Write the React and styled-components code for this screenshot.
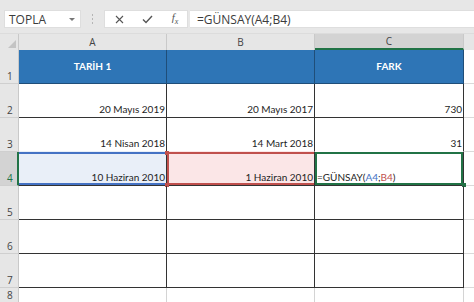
import React from 'react'
import styled, { createGlobalStyle, css } from 'styled-components'

const GlobalStyle = createGlobalStyle`
  html, body { margin: 0; padding: 0; background: #fff; }
  body { overflow: hidden; }
`

const Page = styled.div`
  width: 474px;
  height: 302px;
  display: flex;
  flex-direction: column;
  overflow: hidden;
  font-family: Lato, "Liberation Sans", sans-serif;
`

const Toolbar = styled.div`
  height: 34px;
  flex: none;
  box-sizing: border-box;
  background: #e7e7e7;
  border-bottom: 1px solid #dcdcdc;
  display: flex;
  align-items: flex-start;
  padding: 10px 0 0 4px;
  font-family: "Open Sans", "Liberation Sans", sans-serif;
  font-size: 12px;
  color: #3c3c3c;
`

const NameBox = styled.div`
  width: 77px;
  height: 18px;
  box-sizing: border-box;
  background: #fff;
  border: 1px solid #dedede;
  display: flex;
  align-items: center;
  justify-content: space-between;
  padding: 0 5px 0 4px;
`

const Caret = styled.span`
  width: 0;
  height: 0;
  border-left: 3px solid transparent;
  border-right: 3px solid transparent;
  border-top: 3px solid #777;
`

const Grip = styled.div`
  width: 23px;
  height: 18px;
  display: flex;
  flex-direction: column;
  align-items: center;
  justify-content: center;
  gap: 2px;
  span {
    width: 1px;
    height: 2px;
    background: #b5b5b5;
  }
`

const FxBox = styled.div`
  width: 84px;
  height: 18px;
  box-sizing: border-box;
  background: #fff;
  border: 1px solid #dedede;
  display: grid;
  grid-template-columns: 28px 28px 28px;
  align-items: center;
  justify-items: center;
  color: #555;
`

const FxLabel = styled.span`
  font-family: "Liberation Serif", serif;
  font-style: italic;
  font-size: 11px;
  color: #555;
  sub { font-size: 8px; }
`

const FormulaBar = styled.div`
  flex: 1;
  height: 18px;
  margin-left: 2px;
  box-sizing: border-box;
  background: #fff;
  border-top: 1px solid #dedede;
  border-bottom: 1px solid #dedede;
  display: flex;
  align-items: center;
  padding-left: 7px;
`

const Sheet = styled.div`
  flex: 1;
  display: grid;
  grid-template-columns: 19px 148px 148px 149px 1fr;
  grid-template-rows: 16px repeat(7, 34px) 1fr;
  font-size: 10px;
  color: #1e1e1e;
`

const Corner = styled.div`
  background: #e6e6e6;
  border-right: 1px solid #c9c9c9;
  position: relative;
  &::after {
    content: '';
    position: absolute;
    right: 2px;
    bottom: 2px;
    border-left: 8px solid transparent;
    border-bottom: 8px solid #c4c4c4;
  }
`

const ColHead = styled.div`
  background: ${p => (p.$active ? '#d3d3d3' : '#e6e6e6')};
  border-right: 1px solid ${p => (p.$blank ? 'transparent' : '#c9c9c9')};
  border-bottom: ${p => (p.$active ? '2px solid #217346' : '0')};
  box-sizing: border-box;
  display: flex;
  align-items: center;
  justify-content: center;
  font-family: "Open Sans", "Liberation Sans", sans-serif;
  font-size: 10px;
  color: #444;
`

const RowHead = styled.div`
  background: ${p => (p.$active ? '#d3d3d3' : '#e6e6e6')};
  border-right: ${p => (p.$active ? '2px solid #217346' : '1px solid #c9c9c9')};
  border-bottom: 1px solid #cfcfcf;
  box-sizing: border-box;
  display: flex;
  align-items: flex-end;
  padding: 0 0 0 7px;
  font-family: "Open Sans", "Liberation Sans", sans-serif;
  font-size: 10px;
  line-height: 14px;
  color: ${p => (p.$active ? '#217346' : '#444')};
`

const selColors = {
  blue: { line: '#4472c4', fill: '#e9eff8', sides: 'tb' },
  red: { line: '#c0504d', fill: '#fbe6e7', sides: 'tbl' },
  green: { line: '#217346', fill: '#fff', sides: 'tblr' },
}

const selShadow = ({ line, sides }) =>
  [
    sides.includes('t') && `inset 0 2px 0 ${line}`,
    sides.includes('b') && `inset 0 -2px 0 ${line}`,
    sides.includes('l') && `inset 2px 0 0 ${line}`,
    sides.includes('r') && `inset -2px 0 0 ${line}`,
  ]
    .filter(Boolean)
    .join(', ')

const Cell = styled.div`
  position: relative;
  box-sizing: border-box;
  border-right: 1px solid #333;
  border-bottom: 1px solid #333;
  display: flex;
  align-items: flex-end;
  justify-content: ${p => (p.$left ? 'flex-start' : 'flex-end')};
  padding: 0 1px 1px 2px;
  line-height: 13px;
  white-space: nowrap;
  ${p =>
    p.$head &&
    css`
      background: #2e75b6;
      border-right-color: #1f4e79;
      border-bottom-color: #1f4e79;
      align-items: center;
      justify-content: center;
      padding: 0;
      color: #fff;
      font-weight: 700;
      span { margin-bottom: 1px; }
    `}
  ${p =>
    p.$faint &&
    css`
      border-right-color: #d4d4d4;
      border-bottom: 0;
    `}
  ${p =>
    p.$sel &&
    css`
      background: ${selColors[p.$sel].fill};
      box-shadow: ${selShadow(selColors[p.$sel])};
      margin-top: -1px;
      border-top: 1px solid transparent;
    `}
`

const Handle = styled.span`
  position: absolute;
  width: 4px;
  height: 4px;
  background: ${p => p.$color};
  ${p => (p.$top ? 'top: -1px;' : 'bottom: -2px;')}
  ${p => (p.$right ? 'right: -3px;' : 'left: -2px;')}
`

const Filler = styled.div`
  background: #fff;
  border-bottom: ${p => (p.$none ? '0' : '1px solid #dadada')};
`

const Ref = styled.span`
  color: ${p => p.$color};
`

const rows = [
  { n: 1, head: true, cells: ['TARİH 1', '', 'FARK'] },
  { n: 2, cells: ['20 Mayıs 2019', '20 Mayıs 2017', '730'] },
  { n: 3, cells: ['14 Nisan 2018', '14 Mart 2018', '31'] },
  { n: 4, active: true, cells: ['10 Haziran 2010', '1 Haziran 2010', 'formula'] },
  { n: 5, cells: ['', '', ''] },
  { n: 6, cells: ['', '', ''] },
  { n: 7, cells: ['', '', ''] },
]

const selFor = ['blue', 'red', 'green']

const Formula = () => (
  <span>
    =GÜNSAY(<Ref $color="#4472c4">A4</Ref>;<Ref $color="#c0504d">B4</Ref>)
  </span>
)

const App = () => {
  return (
    <Page>
      <GlobalStyle />
      <Toolbar>
        <NameBox>
          <span>TOPLA</span>
          <Caret />
        </NameBox>
        <Grip>
          <span />
          <span />
          <span />
        </Grip>
        <FxBox>
          <svg width="9" height="9" viewBox="0 0 9 9">
            <path d="M1 1L8 8M8 1L1 8" stroke="#555" strokeWidth="1.1" fill="none" />
          </svg>
          <svg width="11" height="9" viewBox="0 0 11 9">
            <path d="M1 4.5L4 7.5L10 1" stroke="#555" strokeWidth="1.4" fill="none" />
          </svg>
          <FxLabel>
            f<sub>x</sub>
          </FxLabel>
        </FxBox>
        <FormulaBar>=GÜNSAY(A4;B4)</FormulaBar>
      </Toolbar>

      <Sheet>
        <Corner />
        <ColHead>A</ColHead>
        <ColHead>B</ColHead>
        <ColHead $active>C</ColHead>
        <ColHead $blank />

        {rows.map(r => (
          <React.Fragment key={r.n}>
            <RowHead $active={r.active}>{r.n}</RowHead>
            {r.cells.map((c, i) => (
              <Cell
                key={i}
                $head={r.head}
                $sel={r.active ? selFor[i] : undefined}
                $left={c === 'formula'}
              >
                {c === 'formula' ? <Formula /> : <span>{c}</span>}
                {r.active && i === 1 && (
                  <>
                    <Handle $color="#c0504d" $top />
                    <Handle $color="#c0504d" />
                  </>
                )}
                {r.active && i === 2 && <Handle $color="#217346" $right />}
              </Cell>
            ))}
            <Filler />
          </React.Fragment>
        ))}

        <RowHead>8</RowHead>
        <Cell $faint />
        <Cell $faint />
        <Cell $faint />
        <Filler $none />
      </Sheet>
    </Page>
  )
}

export default App
